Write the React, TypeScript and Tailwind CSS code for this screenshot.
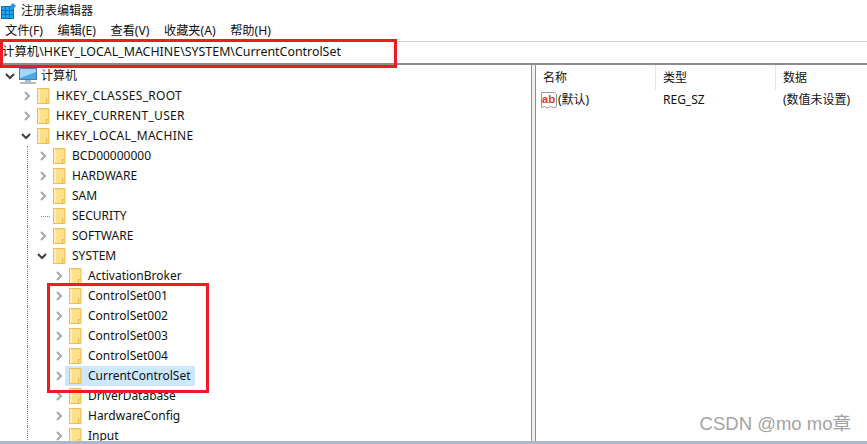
const UI_FONT = "font-['Noto_Sans','Noto_Sans_CJK_SC',sans-serif]";

type Node = {
  name: string;
  depth: number;
  state?: "open" | "closed" | "leaf";
  selected?: boolean;
};

const NODES: Node[] = [
  { name: "HKEY_CLASSES_ROOT", depth: 1, state: "closed" },
  { name: "HKEY_CURRENT_USER", depth: 1, state: "closed" },
  { name: "HKEY_LOCAL_MACHINE", depth: 1, state: "open" },
  { name: "BCD00000000", depth: 2, state: "closed" },
  { name: "HARDWARE", depth: 2, state: "closed" },
  { name: "SAM", depth: 2, state: "closed" },
  { name: "SECURITY", depth: 2, state: "leaf" },
  { name: "SOFTWARE", depth: 2, state: "closed" },
  { name: "SYSTEM", depth: 2, state: "open" },
  { name: "ActivationBroker", depth: 3, state: "closed" },
  { name: "ControlSet001", depth: 3, state: "closed" },
  { name: "ControlSet002", depth: 3, state: "closed" },
  { name: "ControlSet003", depth: 3, state: "closed" },
  { name: "ControlSet004", depth: 3, state: "closed" },
  { name: "CurrentControlSet", depth: 3, state: "closed", selected: true },
  { name: "DriverDatabase", depth: 3, state: "closed" },
  { name: "HardwareConfig", depth: 3, state: "closed" },
  { name: "Input", depth: 3, state: "closed" },
];

function Chevron({ open }: { open?: boolean }) {
  if (open) {
    return (
      <svg width="10" height="7" viewBox="0 0 10 7" fill="none" stroke="#3c3c3c" strokeWidth="2">
        <path d="M1 1l4 4 4-4" />
      </svg>
    );
  }
  return (
    <svg width="7" height="10" viewBox="0 0 7 10" fill="none" stroke="#a6a6a6" strokeWidth="2">
      <path d="M1 1l4 4-4 4" />
    </svg>
  );
}

function Folder() {
  return (
    <svg width="13" height="16" viewBox="0 0 13 16" className="shrink-0">
      <path d="M.5.5h11.5v15H.5z" fill="#fee08c" stroke="#e8bb55" />
      <path d="M1 1h2v14H1z" fill="#feeeb8" />
      <path d="M9.5 15.5v-4h2.5" fill="none" stroke="#e8bb55" />
    </svg>
  );
}

function ComputerIcon() {
  return (
    <svg width="18" height="16" viewBox="0 0 18 16" className="shrink-0">
      <rect x=".5" y=".5" width="17" height="11" fill="#4aa8e6" stroke="#4c7e9f" />
      <path d="M1 1h16v3L1 10z" fill="#a4d8f6" />
      <path d="M6 12h6v2H6z" fill="#a9bcc9" />
      <path d="M1 15h16" stroke="#9aaab5" strokeWidth="1.6" />
    </svg>
  );
}

function RegistryIcon() {
  return (
    <svg width="15" height="18" viewBox="0 0 15 18">
      <path d="M0 4h13v13H0z" fill="#0f6cb0" />
      <path
        d="M1 5h3v3H1zM5 5h3v3H5zM9 5h3v3H9zM1 9h3v3H1zM5 9h3v3H5zM9 9h3v3H9zM1 13h3v3H1zM5 13h3v3H5zM9 13h3v3H9z"
        fill="#1ea7ee"
      />
      <path d="M12 1l3 3-3 3-3-3z" fill="#2f93d6" />
    </svg>
  );
}

function StringValueIcon() {
  return (
    <svg width="16" height="17" viewBox="0 0 16 17" className="shrink-0">
      <path d="M.5.5h13l2 2v12l-3 1.5-3-1.5-3 1.5-3-1.5-3 1z" fill="#fff" stroke="#9a9a9a" />
      <text x="7.5" y="11" textAnchor="middle" fontSize="11.5" fontWeight="700" fill="#d4432a" fontFamily="Liberation Sans, sans-serif">
        ab
      </text>
    </svg>
  );
}

function TreeRow({ node }: { node: Node }) {
  return (
    <div className="flex h-5 items-center">
      {/* indent columns, each carries the dotted guide of its parent */}
      <div className="w-[18px] shrink-0" />
      {node.depth > 1 && <div className="h-full w-4 shrink-0 translate-x-[9px] border-l border-dotted border-[#8a8a8a]" />}
      {node.depth > 2 && <div className="w-4 shrink-0" />}
      <div className="flex h-full w-[15px] shrink-0 items-center justify-end pr-[2px]">
        {node.state === "leaf" ? (
          <div className="w-[9px] translate-x-[3px] border-t border-dotted border-[#8a8a8a]" />
        ) : (
          <Chevron open={node.state === "open"} />
        )}
      </div>
      <div className={`flex h-5 items-center pl-1 ${node.selected ? "bg-[#cce8ff]" : ""}`}>
        <Folder />
        <span
          className={`ml-[6px] pr-1 text-[12px] leading-5 ${node.depth === 1 ? "tracking-[0.3px]" : ""}`}
        >
          {node.name}
        </span>
      </div>
    </div>
  );
}

export default function App() {
  return (
    <div className={`relative flex h-[444px] w-[867px] flex-col overflow-hidden bg-white text-[#111] ${UI_FONT}`}>
      {/* title bar */}
      <div className="flex h-5 items-center gap-[5px] pl-[1px] pt-[1px] text-[12px]">
        <RegistryIcon />
        <span>注册表编辑器</span>
      </div>

      {/* menu */}
      <div className="flex h-[21px] items-center gap-[14.5px] pl-[5px] pt-[1px] text-[12.2px]">
        <span>文件(F)</span>
        <span>编辑(E)</span>
        <span>查看(V)</span>
        <span>收藏夹(A)</span>
        <span>帮助(H)</span>
      </div>

      {/* address bar */}
      <div className="flex h-6 items-center border-t border-[#d0d0d0] border-b-2 border-b-[#8c8c8c] pl-[2px] text-[12.4px]">
        计算机\HKEY_LOCAL_MACHINE\SYSTEM\CurrentControlSet
      </div>

      {/* panes */}
      <div className="flex min-h-0 flex-1">
        <div className="w-[531px] shrink-0 overflow-hidden pt-[1px]">
          <div className="flex h-5 items-center pl-[5px] text-[12px]">
            <Chevron open />
            <span className="ml-1">
              <ComputerIcon />
            </span>
            <span className="ml-[4px]">计算机</span>
          </div>
          {NODES.map((n) => (
            <TreeRow key={n.name} node={n} />
          ))}
        </div>

        {/* splitter */}
        <div className="w-[5px] shrink-0 border-x border-[#8f8f8f] bg-[#f0f0f0]" />

        {/* values */}
        <div className="min-w-0 flex-1 text-[12px]">
          <div className="flex h-[25px] items-center">
            <div className="flex h-full w-[120px] items-center border-r border-[#e5e5e5] pl-[7px]">名称</div>
            <div className="flex h-full w-[120px] items-center border-r border-[#e5e5e5] pl-[7px]">类型</div>
            <div className="flex h-full items-center pl-[7px]">数据</div>
          </div>
          <div className="flex h-5 items-center">
            <div className="flex w-[120px] items-center pl-[5px]">
              <StringValueIcon />
              <span className="ml-[1px]">(默认)</span>
            </div>
            <div className="w-[120px] pl-[7px]">REG_SZ</div>
            <div className="pl-[7px]">(数值未设置)</div>
          </div>
        </div>
      </div>

      {/* bottom edge of the cropped window */}
      <div className="h-[3px] shrink-0 bg-[#a9b8cc]" />

      {/* red annotation boxes drawn over the screenshot */}
      <div className="absolute left-0 top-[39px] h-[29px] w-[397px] border-[3px] border-[#ed1c24]" />
      <div className="absolute left-[47px] top-[283px] h-[110px] w-[162px] border-[3px] border-[#ed1c24]" />

      {/* watermark */}
      <span className="absolute right-[16px] top-[414px] font-['Liberation_Sans','Noto_Sans_CJK_SC',sans-serif] text-[18.5px] leading-5 text-[#a3a3a3]">
        CSDN @mo mo章
      </span>
    </div>
  );
}
